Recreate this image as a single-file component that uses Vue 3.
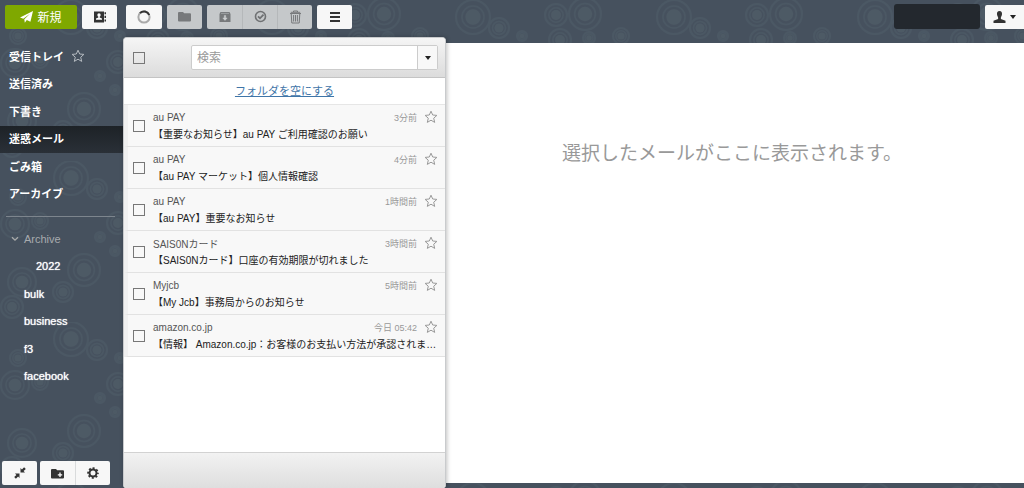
<script setup>
import { ref } from 'vue'

const tileCircles = [
  [71, 17, 17], [97, 28, 10], [84, 109, 16], [63, 131, 10], [22, 121, 14],
  [12, 146, 11], [18, 36, 8], [15, 63, 14], [40, 60, 8], [100, 76, 5],
  [118, 62, 11], [115, 90, 5], [183, 14, 16], [154, 15, 11], [158, 40, 11],
  [187, 38, 6], [120, 36, 5], [140, 120, 15], [175, 95, 12], [182, 130, 9],
]
const folders = ['受信トレイ', '送信済み', '下書き', '迷惑メール', 'ごみ箱', 'アーカイブ']
const active = ref('迷惑メール')
const labels = ['Archive', '2022', 'bulk', 'business', 'f3', 'facebook']
const mails = [
  { from: 'au PAY', time: '3分前', subject: '【重要なお知らせ】au PAY ご利用確認のお願い' },
  { from: 'au PAY', time: '4分前', subject: '【au PAY マーケット】個人情報確認' },
  { from: 'au PAY', time: '1時間前', subject: '【au PAY】重要なお知らせ' },
  { from: 'SAIS0Nカード', time: '3時間前', subject: '【SAIS0Nカード】口座の有効期限が切れました' },
  { from: 'Myjcb', time: '5時間前', subject: '【My Jcb】事務局からのお知らせ' },
  { from: 'amazon.co.jp', time: '今日 05:42', subject: '【情報】 Amazon.co.jp：お客様のお支払い方法が承認されま…' },
]
const starPath = 'M7 1.2 8.7 5 12.9 5.4 9.7 8.2 10.7 12.4 7 10.2 3.3 12.4 4.3 8.2 1.1 5.4 5.3 5Z'
</script>

<template>
  <div class="app">
    <svg class="backdrop" aria-hidden="true">
      <defs>
        <pattern id="rings" width="201" height="161" patternUnits="userSpaceOnUse">
          <g v-for="(c, i) in tileCircles" :key="i">
            <circle :cx="c[0]" :cy="c[1]" :r="c[2]" fill="none" stroke="#4b5864" stroke-width="2" />
            <circle :cx="c[0]" :cy="c[1]" :r="c[2] * 0.65" fill="none" stroke="#4b5864" stroke-width="1.5" />
            <circle :cx="c[0]" :cy="c[1]" :r="c[2] * 0.45" fill="#4d5a65" />
          </g>
        </pattern>
      </defs>
      <rect width="100%" height="100%" fill="url(#rings)" />
    </svg>

    <header class="toolbar">
      <button class="btn compose">
        <svg width="13" height="12" viewBox="0 0 13 12"><path d="M0 6.6 13 0 10.4 10.8 6.8 9.1 4.8 11.8 4.3 8.2 10.3 2.4 3.3 7.7Z" fill="#fff" /></svg>
        新規
      </button>
      <button class="btn contacts" aria-label="アドレス帳">
        <svg width="12" height="12" viewBox="0 0 12 12"><path d="M0 .5H10V11.5H0Z M10.5 1.2H12V3.3H10.5Z M10.5 4.8H12V6.9H10.5Z M10.5 8.4H12V10.5H10.5Z" fill="#333" /><circle cx="5" cy="4" r="1.7" fill="#fff" /><path d="M2 8.7V7.4L4.3 6.5V5H5.7V6.5L8 7.4V8.7Z" fill="#fff" /></svg>
      </button>
      <button class="btn refresh" aria-label="更新">
        <svg width="14" height="14" viewBox="0 0 14 14" fill="none" stroke-width="2"><circle cx="7" cy="7" r="5.6" stroke="#aaa" /><path d="M3 3.1A5.6 5.6 0 0 1 12.2 5" stroke="#333" /></svg>
      </button>
      <button class="btn muted" aria-label="移動">
        <svg width="13" height="11" viewBox="0 0 13 11"><path d="M0 2Q0 1 1 1H5L6.2 2.2H12Q13 2.2 13 3.2V9.5Q13 10.5 12 10.5H1Q0 10.5 0 9.5Z" fill="#77797b" /></svg>
      </button>
      <div class="group">
        <button class="btn muted" aria-label="アーカイブ">
          <svg width="12" height="12" viewBox="0 0 12 12"><path d="M1.5 1H10.5L11.5 3V11H.5V3Z" fill="#77797b" /><path d="M2 2.4H10M5.3 4.4H6.7V7H8.2L6 9.4 3.8 7H5.3Z" fill="#d0d1d2" stroke="#c5c8ca" stroke-width=".5" /></svg>
        </button>
        <button class="btn muted" aria-label="既読にする">
          <svg width="13" height="13" viewBox="0 0 13 13" fill="none" stroke="#6f7173"><circle cx="6.5" cy="6.5" r="5" stroke-width="1.6" /><path d="M4 6.3 6 8.3 9.5 4.6" stroke-width="1.8" /></svg>
        </button>
        <button class="btn muted" aria-label="削除">
          <svg width="13" height="14" viewBox="0 0 13 14" fill="none" stroke="#77797b"><path d="M1 3.5H12M1.8 2.3H11.2M4.5 2V1H8.5V2M2.2 3.5 2.8 13H10.2L10.8 3.5M4.6 5V11.5M6.5 5V11.5M8.4 5V11.5" /></svg>
        </button>
      </div>
      <button class="btn" aria-label="メニュー">
        <svg width="10" height="10" viewBox="0 0 10 10" stroke="#333" stroke-width="2"><path d="M0 1H10M0 5H10M0 9H10" /></svg>
      </button>
      <div class="account"></div>
      <button class="btn user" aria-label="アカウント">
        <svg width="13" height="12" viewBox="0 0 13 12"><path d="M6.5 0C8.5 0 9.2 1.4 9 3.2 8.9 4.8 8.2 5.5 7.9 6.2V8L12.5 9.8V12H.5V9.8L5.1 8V6.2C4.8 5.5 4.1 4.8 4 3.2 3.8 1.4 4.5 0 6.5 0Z" fill="#333" /></svg>
        <span class="caret"></span>
      </button>
    </header>

    <div class="columns">
      <nav class="sidebar">
        <ul class="folders">
          <li v-for="f in folders" :key="f">
            <a href="#" :class="{ active: f === active }" @click.prevent="active = f">{{ f }}
              <svg v-if="f === '受信トレイ'" width="14" height="14" viewBox="0 0 14 14" fill="none" stroke="#b4bac0"><path :d="starPath" /></svg>
            </a>
          </li>
        </ul>
        <hr />
        <ul class="folders labels">
          <li v-for="l in labels" :key="l">
            <a href="#" :class="{ parent: l === 'Archive', child: l === '2022' }" @click.prevent>
              <svg v-if="l === 'Archive'" width="8" height="6" viewBox="0 0 8 6" fill="none" stroke="#aaa" stroke-width="1.3"><path d="M1 1.2 4 4.2 7 1.2" /></svg>
              {{ l }}
            </a>
          </li>
        </ul>
        <footer class="tools">
          <button class="btn" aria-label="縮小">
            <svg width="12" height="12" viewBox="0 0 12 12" fill="#333"><path d="M6.5 1V5.5H11L9.6 4.1 11.8 1.9 10.1.2 7.9 2.4Z M5.5 11V6.5H1L2.4 7.9 .2 10.1 1.9 11.8 4.1 9.6Z" /></svg>
          </button>
          <div class="group">
            <button class="btn" aria-label="フォルダを追加">
              <svg width="13" height="11" viewBox="0 0 13 11"><path d="M0 2Q0 1 1 1H5L6.2 2.2H12Q13 2.2 13 3.2V9.5Q13 10.5 12 10.5H1Q0 10.5 0 9.5Z" fill="#333" /><path d="M9 4.5V9M6.8 6.8H11.2" stroke="#fff" stroke-width="1.3" /></svg>
            </button>
            <button class="btn" aria-label="設定">
              <svg width="12" height="12" viewBox="0 0 12 12" fill="none" stroke="#333"><circle cx="6" cy="6" r="3.5" stroke-width="2" /><circle cx="6" cy="6" r="4.9" stroke-width="1.8" stroke-dasharray="2 1.85" stroke-dashoffset="1" /></svg>
            </button>
          </div>
        </footer>
      </nav>

      <section class="list">
        <div class="list-head">
          <input type="checkbox" aria-label="すべて選択" />
          <div class="search">
            <input type="text" placeholder="検索" aria-label="検索" />
            <button aria-label="検索オプション"><span class="caret"></span></button>
          </div>
        </div>
        <div class="empty"><a href="#" @click.prevent>フォルダを空にする</a></div>
        <ul class="mails">
          <li v-for="(m, i) in mails" :key="i">
            <input type="checkbox" :aria-label="m.subject" />
            <div class="mail">
              <div class="meta">
                <span class="from">{{ m.from }}</span>
                <span class="time">{{ m.time }}</span>
                <button class="star" aria-label="スター"><svg width="14" height="14" viewBox="0 0 14 14" fill="none" stroke="#999"><path :d="starPath" /></svg></button>
              </div>
              <div class="subject">{{ m.subject }}</div>
            </div>
          </li>
        </ul>
        <div class="list-foot"></div>
      </section>

      <main class="reader">
        <p>選択したメールがここに表示されます。</p>
      </main>
    </div>
  </div>
</template>

<style>
body { margin: 0; }
</style>

<style scoped>
* { box-sizing: border-box; }
.app {
  position: relative;
  display: flex;
  flex-direction: column;
  min-height: 100vh;
  overflow: hidden;
  background: #46515e;
  color: #333;
  font-family: "Liberation Sans", "Noto Sans CJK JP", sans-serif;
  font-size: 11px;
}
.backdrop { position: absolute; inset: 0; width: 100%; height: 100%; }
.toolbar, .columns { position: relative; }
ul { list-style: none; margin: 0; padding: 0; }
button, input { font: inherit; }
svg { display: block; flex: none; }

.toolbar { display: flex; align-items: center; gap: 5px; height: 37px; padding: 0 0 4px 5px; }
.btn {
  display: flex;
  align-items: center;
  justify-content: center;
  gap: 4px;
  width: 35px;
  height: 24px;
  padding: 0;
  border: 0;
  border-radius: 2px;
  background: #f7f7f7;
  color: #333;
}
.compose { width: 72px; background: #7fa800; color: #fff; font-size: 12px; }
.refresh { width: 36px; margin-left: 4px; }
.muted { background: #c5c8ca; }
.group { display: flex; }
.group .btn:first-child { border-radius: 2px 0 0 2px; }
.group .btn + .btn { border-left: 1px solid #d9dbdc; border-radius: 0; }
.group .btn:last-child { border-radius: 0 2px 2px 0; }
.group .muted + .muted { border-left-color: #b5b8ba; }
.account { width: 86px; height: 25px; margin-left: auto; border-radius: 3px; background: #23282e; }
.user { width: 39px; border-radius: 2px 0 0 2px; }
.caret { border: 3px solid transparent; border-top: 4px solid #222; border-bottom: 0; }

.columns { display: grid; grid-template-columns: 123px 323px 1fr; flex: 1; }
.sidebar { display: flex; flex-direction: column; padding-top: 6px; }
.folders { display: grid; grid-auto-rows: 1fr; height: 165px; }
.folders a {
  display: flex;
  align-items: center;
  gap: 7px;
  height: 100%;
  padding: 0 0 2px 9px;
  color: #fff;
  font-weight: bold;
  text-decoration: none;
}
.folders a.active { background: linear-gradient(#1d2227, #2a3037); }
hr { width: 109px; margin: 8px 0 8px 6px; border: 0; border-top: 1px solid #7d858d; }
.labels a { padding: 0 0 0 24px; font-weight: normal; text-shadow: 0 0 1px #fff; }
.labels a.parent { gap: 5px; padding-left: 11px; color: #a8abae; text-shadow: none; }
.labels a.child { padding-left: 36px; }
.tools { display: flex; gap: 3px; margin-top: auto; padding: 0 0 3px 2px; }

.list {
  z-index: 1;
  display: flex;
  flex-direction: column;
  min-width: 0;
  overflow: hidden;
  border: 1px solid #c9cbcd;
  border-bottom: 0;
  border-radius: 4px 4px 3px 3px;
  background: #fff;
  box-shadow: 1px 0 4px rgba(0, 0, 0, .25);
}
.list-head {
  display: flex;
  align-items: center;
  justify-content: space-between;
  height: 40px;
  padding: 0 7px 0 9px;
  border-bottom: 1px solid #c4c4c4;
  background: linear-gradient(#f5f5f5, #dcdcdc);
}
input[type="checkbox"] {
  appearance: none;
  flex: none;
  width: 12px;
  height: 12px;
  margin: 0;
  border: 1px solid #777;
  background: transparent;
}
.search { display: flex; width: 247px; height: 25px; border: 1px solid #ccc; border-radius: 2px; background: #fff; }
.search input { flex: 1; min-width: 0; padding: 0 5px; border: 0; background: transparent; font-size: 12px; }
.search input::placeholder { color: #999; }
.search button {
  display: flex;
  align-items: center;
  justify-content: center;
  width: 20px;
  padding: 0;
  border: 0;
  border-left: 1px solid #ccc;
  background: #f8f8f8;
}
.empty { height: 27px; border-bottom: 1px solid #e6e6e6; line-height: 27px; text-align: center; }
.empty a { color: #3f75a8; }
.mails li {
  display: flex;
  align-items: center;
  gap: 8px;
  height: 42px;
  padding-left: 5px;
  border-left: 4px solid #f0f0f0;
  border-bottom: 1px solid #e2e2e2;
  background: #f8f8f8;
  font-size: 10px;
}
.mail { flex: 1; min-width: 0; }
.meta { display: flex; align-items: center; height: 17px; padding-right: 7px; }
.from { flex: 1; color: #555; }
.time { color: #999; font-size: 9px; }
.star { margin-left: 7px; padding: 0; border: 0; background: none; }
.subject {
  height: 17px;
  margin-right: 4px;
  overflow: hidden;
  line-height: 17px;
  text-overflow: ellipsis;
  white-space: nowrap;
  color: #222;
}
.list-foot { height: 36px; margin-top: auto; border-top: 1px solid #d2d2d2; background: linear-gradient(#f2f2f2, #dedede); }
.reader { margin: 6px 0 5px; background: #fff; }
.reader p { margin: 97px 6px 0 0; color: #999; font-size: 19px; line-height: 28px; text-align: center; }
</style>
